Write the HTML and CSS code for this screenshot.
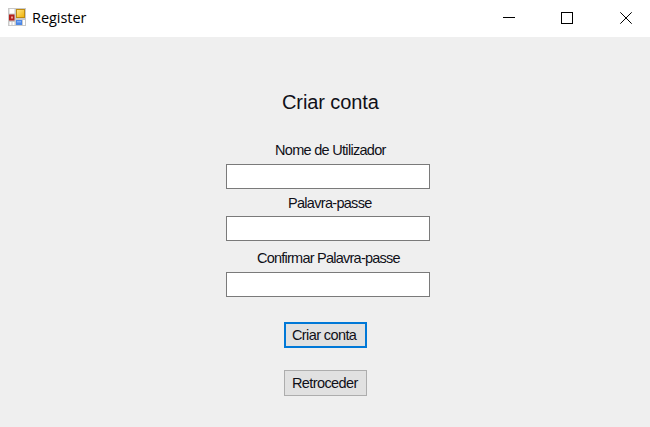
FILE: index.html
```html
<!DOCTYPE html>
<html lang="pt">
<head>
<meta charset="utf-8">
<title>Register</title>
<link rel="stylesheet" href="styles.css">
</head>
<body>
<header class="titlebar">
  <svg class="app-icon" width="18" height="18" viewBox="0 0 18 18">
    <defs>
      <linearGradient id="gold" x2="1" y2="1"><stop stop-color="#ffe88a"/><stop offset="1" stop-color="#f0b000"/></linearGradient>
    </defs>
    <rect width="18" height="18" fill="#c9c9c9"/>
    <rect x="1.5" y="1" width="5" height="4.5" fill="#fff"/>
    <rect x="1" y="6.5" width="5.5" height="6" fill="#b3201c"/>
    <rect x="3" y="8.5" width="2" height="2" fill="#ee9a8c"/>
    <rect x="1.5" y="14" width="2" height="3" fill="#fff"/>
    <rect x="4.5" y="14" width="2" height="3" fill="#fff"/>
    <rect x="8.5" y="1.5" width="8" height="8" fill="url(#gold)" stroke="#bd8a10"/>
    <rect x="8" y="12" width="6" height="5" fill="#4c87e6"/>
    <rect x="9" y="13" width="4" height="1.5" fill="#83b0f5"/>
    <rect x="15" y="12" width="2" height="5" fill="#fff"/>
  </svg>
  <span class="caption">Register</span>
  <svg class="controls" width="130" height="13" viewBox="0 0 130 13" fill="none" stroke="#000">
    <path d="M0 5.5H12"/>
    <rect x="58.5" y=".5" width="11" height="11"/>
    <path d="M117.3 .3L128.7 11.7M128.7 .3L117.3 11.7"/>
  </svg>
</header>
<main class="form">
  <h1 class="heading">Criar conta</h1>
  <label class="label label-user" for="user">Nome de Utilizador</label>
  <input class="field" id="user" type="text">
  <label class="label label-pass" for="pass">Palavra-passe</label>
  <input class="field" id="pass" type="password">
  <label class="label label-confirm" for="confirm">Confirmar Palavra-passe</label>
  <input class="field" id="confirm" type="password">
  <button class="button primary">Criar conta</button>
  <button class="button secondary">Retroceder</button>
</main>
</body>
</html>
```
FILE: styles.css
```css
* { box-sizing: border-box; }
body {
  margin: 0;
  height: 427px;
  overflow: hidden;
  background: #efefef;
  color: #101018;
  font-family: "Liberation Sans", Arial, sans-serif;
}
.titlebar {
  display: flex;
  height: 37px;
  padding: 8px 17px 0 8px;
  background: #fff;
}
.app-icon { flex: none; }
.caption {
  margin-left: 6px;
  font: 14.5px/20px "Open Sans", "Noto Sans", sans-serif;
  letter-spacing: -0.05px;
  color: #000;
}
.controls { margin: 4px 0 0 auto; }
.form {
  display: flex;
  flex-direction: column;
  align-items: flex-start;
  padding-left: 226px;
}
.heading {
  margin: 53px 0 0 56px;
  font-size: 20px;
  line-height: 24px;
  font-weight: 400;
  letter-spacing: -0.1px;
}
.label {
  height: 18px;
  font-size: 14.5px;
  line-height: 18px;
  letter-spacing: -0.7px;
  white-space: nowrap;
}
.label-user { margin: 27px 0 5px 49px; }
.label-pass { margin: 5px 0 4px 62px; }
.label-confirm { margin: 8px 0 5px 31px; letter-spacing: -0.76px; }
.field {
  width: 204px;
  height: 25px;
  margin: 0;
  padding: 2px;
  border: 1px solid #7a7a7a;
  background: #fff;
  outline: none;
}
.button {
  width: 83px;
  height: 26px;
  margin-left: 58px;
  padding: 0 0 0 7px;
  border: 1px solid #adadad;
  background: #e1e1e1;
  color: inherit;
  font: 14.5px/18px "Liberation Sans", Arial, sans-serif;
  letter-spacing: -0.6px;
  text-align: left;
  white-space: nowrap;
}
.primary {
  margin-top: 25px;
  padding-left: 6px;
  border: 2px solid #0078d7;
}
.secondary { margin-top: 22px; }
```
